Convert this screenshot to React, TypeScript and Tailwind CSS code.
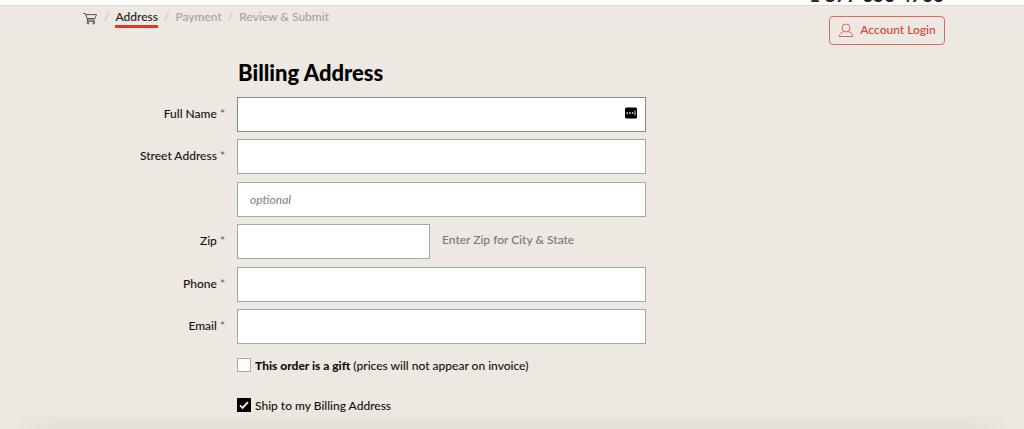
import React, { useState } from 'react';

type FieldProps = {
  id: string;
  label?: string;
  ariaLabel?: string;
  type?: string;
  placeholder?: string;
  active?: boolean;
  narrow?: boolean;
  hint?: string;
};

function Field({ id, label, ariaLabel, type = 'text', placeholder, active, narrow, hint }: FieldProps) {
  return (
    <div className="flex h-[35px] gap-3">
      <div className="w-36 shrink-0 pt-[9px] text-right leading-4">
        {label && (
          <label htmlFor={id}>
            {label} <span className="text-[#666]">*</span>
          </label>
        )}
      </div>
      <div className={narrow ? 'w-[193px]' : 'relative w-full max-w-[409px]'}>
        <input
          id={id}
          type={type}
          aria-label={ariaLabel}
          placeholder={placeholder}
          className={`block h-full w-full border bg-white px-3 outline-none placeholder:text-[#888] placeholder:italic ${
            active ? 'border-[#868684]' : 'border-[#a5a5a2]'
          }`}
        />
        {active && (
          <svg viewBox="0 0 12 12" className="absolute top-2.5 right-[9px] size-3" aria-hidden="true">
            <rect y="0.5" width="12" height="11" rx="1.5" fill="#000" />
            <path d="M1.5 6h1.5M4.2 6h1.5M6.9 6h1.5" stroke="#eee" strokeWidth="1.5" />
            <path d="M10 3.5v5" stroke="#ccc" strokeWidth="1" />
          </svg>
        )}
      </div>
      {hint && <span className="pt-2 leading-4 whitespace-nowrap text-[#74777c]">{hint}</span>}
    </div>
  );
}

function Check({ id, checked, onToggle, children }: { id: string; checked: boolean; onToggle: () => void; children: React.ReactNode }) {
  return (
    <div className="flex h-4 items-start gap-1">
      <span className="relative size-3.5">
        <input
          id={id}
          type="checkbox"
          checked={checked}
          onChange={onToggle}
          className="block size-3.5 appearance-none border border-[#aaa9a6] bg-white checked:border-black checked:bg-black"
        />
        {checked && (
          <svg viewBox="0 0 14 14" className="pointer-events-none absolute inset-0 size-3.5" fill="none" aria-hidden="true">
            <path d="M3 7.4l2.6 2.5L11 4" stroke="#fff" strokeWidth="1.8" />
          </svg>
        )}
      </span>
      <label htmlFor={id} className="leading-4">{children}</label>
    </div>
  );
}

export default function App() {
  const [gift, setGift] = useState(false);
  const [ship, setShip] = useState(true);
  return (
    <div className="flex h-screen min-h-[429px] flex-col overflow-hidden bg-[#ede8e1] font-['Lato',sans-serif] text-xs font-medium text-[#111]">
      <header className="flex h-1.5 shrink-0 items-end justify-end border-b border-[#dedbd6] bg-white pr-20">
        <span className="-mb-0.5 text-[19px] leading-6 font-bold text-[#222]">1 877 653 4766</span>
      </header>
      <main className="flex-1 pr-[79px] pl-[81px]">
        <div className="flex h-[53px] items-start justify-between">
          <nav aria-label="Checkout steps" className="flex items-start gap-1.5 pt-[3px] pl-0.5 leading-4 text-[#a5a29e]">
            <a href="#cart" aria-label="Cart" className="pt-0.5 pr-px">
              <svg viewBox="0 0 14 14" className="size-3.5" fill="none" stroke="#555" strokeWidth="1" aria-hidden="true">
                <path d="M0.3 2.5h2.2L4.6 9h7.2M2.9 3.6h10.6l-1.6 3.9H4.2M4.6 9l-.6 1.2h8" />
                <circle cx="5" cy="12" r="1" />
                <circle cx="10.8" cy="12" r="1" />
              </svg>
            </a>
            <span className="text-[#c9c5bf]">/</span>
            <a href="#address" className="border-b-[3px] border-[#d83a2e] text-[#222]">Address</a>
            <span className="text-[#c9c5bf]">/</span>
            <a href="#payment">Payment</a>
            <span className="text-[#c9c5bf]">/</span>
            <a href="#review">Review &amp; Submit</a>
          </nav>
          <button type="button" className="mt-2.5 flex h-[29px] w-[116px] items-center justify-center gap-1.5 rounded-sm border border-[#dc6a5e] pb-px text-[#d1453a]">
            <svg viewBox="0 0 16 16" className="size-4" fill="none" stroke="#dc6a5e" strokeWidth="1" aria-hidden="true">
              <circle cx="8" cy="6" r="4" />
              <path d="M5.8 9.5C3 10.3 1.5 12 1.2 14.5h13.6C14.5 12 13 10.3 10.2 9.5" />
            </svg>
            Account Login
          </button>
        </div>
        <form>
          <h1 className="pl-[157px] text-[22px] leading-7 font-black text-black">Billing Address</h1>
          <div className="mt-2.5 grid h-[247px] content-between">
            <Field id="name" label="Full Name" active />
            <Field id="street" label="Street Address" />
            <Field id="street2" ariaLabel="Street Address line 2" placeholder="optional" />
            <Field id="zip" label="Zip" narrow hint="Enter Zip for City & State" />
            <Field id="phone" label="Phone" type="tel" />
            <Field id="email" label="Email" type="email" />
          </div>
          <div className="mt-3.5 flex flex-col gap-6 pl-[156px]">
            <Check id="gift" checked={gift} onToggle={() => setGift(!gift)}>
              <strong className="font-black">This order is a gift</strong> (prices will not appear on invoice)
            </Check>
            <Check id="ship" checked={ship} onToggle={() => setShip(!ship)}>
              Ship to my Billing Address
            </Check>
          </div>
        </form>
      </main>
      <div className="mx-8 -mb-1.5 h-1 shrink-0 bg-[#d8d4cc] shadow-[0_0_20px_2px_#d0ccc3]" />
    </div>
  );
}
